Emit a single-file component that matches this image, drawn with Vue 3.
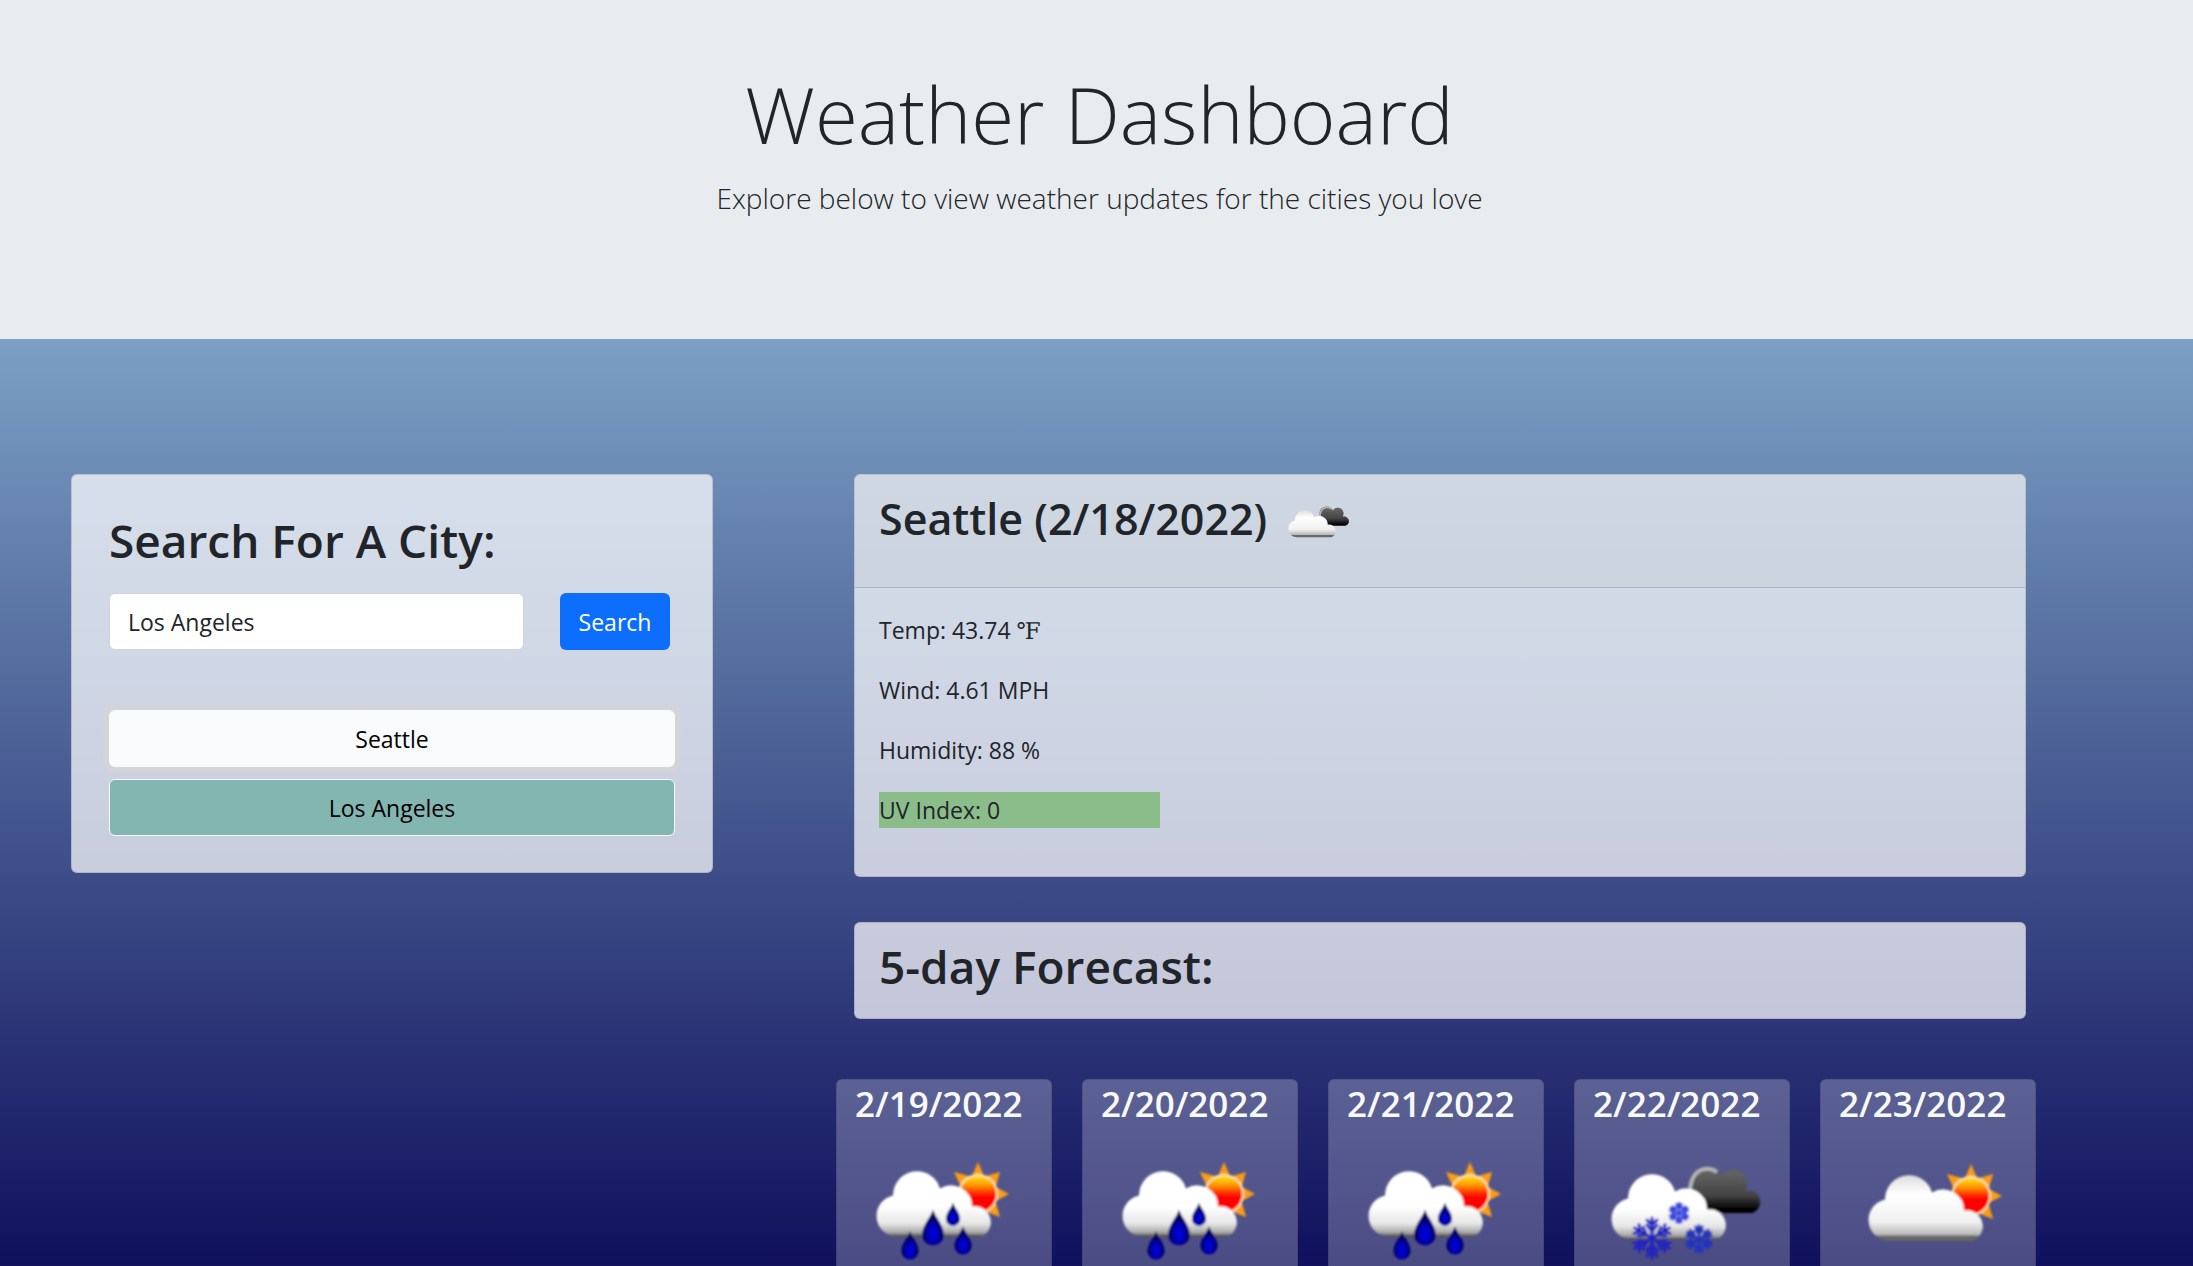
<script setup>
import { ref } from 'vue'

const query = ref('Los Angeles')
const forecast = [
  { date: '2/19/2022', icon: 'rain' },
  { date: '2/20/2022', icon: 'rain' },
  { date: '2/21/2022', icon: 'rain' },
  { date: '2/22/2022', icon: 'snow' },
  { date: '2/23/2022', icon: 'sun' },
]
</script>

<template>
  <div class="page">
    <svg class="defs" width="0" height="0" aria-hidden="true">
      <defs>
        <filter id="soft" x="-5%" y="-5%" width="110%" height="110%"><feGaussianBlur stdDeviation="0.9" /></filter>
        <linearGradient id="cloudFill" gradientUnits="userSpaceOnUse" x1="0" y1="29" x2="0" y2="97">
          <stop offset="0" stop-color="#fff" />
          <stop offset="0.55" stop-color="#fff" />
          <stop offset="0.8" stop-color="#e6e6e6" />
          <stop offset="0.93" stop-color="#aaa" />
          <stop offset="1" stop-color="#444" />
        </linearGradient>
        <linearGradient id="cloudBase" gradientUnits="userSpaceOnUse" x1="0" y1="29" x2="0" y2="99">
          <stop offset="0" stop-color="#d8d8d8" />
          <stop offset="0.3" stop-color="#fff" />
          <stop offset="0.7" stop-color="#f0f0f0" />
          <stop offset="0.88" stop-color="#b8b8b8" />
          <stop offset="0.9" stop-color="#6c6c6c" />
          <stop offset="1" stop-color="#606060" />
        </linearGradient>
        <linearGradient id="darkFill" gradientUnits="userSpaceOnUse" x1="0" y1="25" x2="0" y2="73">
          <stop offset="0.2" stop-color="#606060" />
          <stop offset="0.65" stop-color="#424242" />
          <stop offset="0.9" stop-color="#050505" />
        </linearGradient>
        <linearGradient id="sunFill" x1="0" y1="0" x2="0" y2="1">
          <stop offset="0" stop-color="#ffe020" />
          <stop offset="0.25" stop-color="#ff9a00" />
          <stop offset="0.5" stop-color="#ff2000" />
          <stop offset="0.6" stop-color="#f00" />
        </linearGradient>
        <radialGradient id="dropFill" cx="0.5" cy="0.68" r="0.5">
          <stop offset="0" stop-color="#0000e6" />
          <stop offset="0.5" stop-color="#0000b4" />
          <stop offset="1" stop-color="#00004c" />
        </radialGradient>
        <path id="cloud" d="M38 97A21 21 0 0 1 33 55.500A24 24 0 0 1 80 48.500A21 21 0 0 1 112 66.500A16 16 0 0 1 121 97Z" />
        <path id="drop" d="M0-16C2-9 10-2 10 7A10 10 0 0 1-10 7C-10-2-2-9 0-16Z" fill="url(#dropFill)" />
        <g id="sun">
          <path fill="#f99d12" d="M0-32L6-18L-6-18ZM-24-22L-9-18L-18-9ZM22-22L18-8L8-18ZM31 0L18 7L18-7ZM22 23L9 18L18 9Z" />
          <circle r="20" fill="#ffe3b0" />
          <circle r="18" fill="url(#sunFill)" />
        </g>
        <g id="dark">
          <path fill="url(#darkFill)" d="M92 73L89 44A17 17 0 0 1 121 36A14 14 0 0 1 145 51A11 11 0 0 1 152 73Z" />
          <path fill="none" stroke="#b4b4b4" stroke-width="4" d="M90 50C91 37 97 30 105 29Q112 28 117 32" />
        </g>
        <g id="flake" fill="none" stroke-linecap="round">
          <g v-for="a in [0, 60, 120, 180, 240, 300]" :key="a" :transform="`rotate(${a})`">
            <path d="M0 0V-20M0-7L-5-13M0-7L5-13M0-13L-5-18M0-13L5-18" />
          </g>
        </g>
      </defs>
    </svg>

    <header class="hero">
      <h1>Weather Dashboard</h1>
      <p>Explore below to view weather updates for the cities you love</p>
    </header>

    <main class="content">
      <aside class="card search">
        <h2><label for="city">Search For A City:</label></h2>
        <form class="search-row" @submit.prevent>
          <input id="city" v-model="query" type="text" />
          <button class="primary" type="submit">Search</button>
        </form>
        <div class="history">
          <button class="city focused" type="button">Seattle</button>
          <button class="city teal" type="button">Los Angeles</button>
        </div>
      </aside>

      <div class="results">
        <section class="card">
          <div class="card-header">
            <h3>Seattle (2/18/2022)</h3>
            <svg class="now-icon" viewBox="13 24 152 80" role="img" aria-label="Broken clouds">
              <g filter="url(#soft)">
                <use href="#dark" />
                <use href="#cloud" x="-3" y="4" fill="url(#cloudBase)" />
              </g>
            </svg>
          </div>
          <div class="card-body">
            <p>Temp: 43.74 <span class="unit">℉</span></p>
            <p>Wind: 4.61 MPH</p>
            <p>Humidity: 88 %</p>
            <p class="uv">UV Index: 0</p>
          </div>
        </section>

        <section class="card forecast-title">
          <h2>5-day Forecast:</h2>
        </section>

        <div class="days">
          <article v-for="day in forecast" :key="day.date" class="day">
            <h4>{{ day.date }}</h4>
            <svg class="day-icon" viewBox="0 0 170 126" aria-hidden="true">
              <g v-if="day.icon === 'rain'" filter="url(#soft)">
                <use href="#sun" x="118" y="54" />
                <use href="#cloud" fill="url(#cloudFill)" />
                <use href="#drop" transform="translate(93 74) scale(0.7)" />
                <use href="#drop" transform="translate(73 87) scale(1.08)" />
                <use href="#drop" transform="translate(50 105) scale(0.86)" />
                <use href="#drop" transform="translate(103 100) scale(0.86)" />
              </g>
              <g v-else-if="day.icon === 'snow'" filter="url(#soft)">
                <use href="#dark" x="2" />
                <use href="#cloud" x="-3" y="3" fill="url(#cloudFill)" />
                <use href="#flake" transform="translate(54 98)" stroke="#2024c0" stroke-width="3" />
                <use href="#flake" transform="translate(81 73) scale(0.5)" stroke="#3a48dc" stroke-width="5" />
                <use href="#flake" transform="translate(101 99) scale(0.68)" stroke="#2434bc" stroke-width="4" />
              </g>
              <g v-else filter="url(#soft)">
                <use href="#sun" x="127" y="56" />
                <use href="#cloud" x="8" y="4" fill="url(#cloudBase)" />
              </g>
            </svg>
          </article>
        </div>
      </div>
    </main>
  </div>
</template>

<style>
body {
  margin: 0;
}
</style>

<style scoped>
.page {
  display: flex;
  flex-direction: column;
  height: 100vh;
  overflow: hidden;
  box-sizing: border-box;
  color: #212529;
  font: 400 23px/36px "Segoe UI", "Open Sans", "Noto Sans", sans-serif;
}
.page * {
  box-sizing: border-box;
}
.defs {
  position: absolute;
}
h1, h2, h3, h4, p {
  margin: 0;
}
h2, h3, h4 {
  font-weight: 600;
}
.hero {
  flex: none;
  height: 339px;
  padding: 64px 0 0 6px;
  background: #e8ecef;
  text-align: center;
  font-weight: 300;
}
.hero h1 {
  font-size: 78px;
  line-height: 101px;
  font-weight: 300;
}
.hero p {
  margin-top: 12px;
  font-size: 28px;
  line-height: 42px;
}
.content {
  flex: 1;
  min-height: 0;
  display: grid;
  grid-template-columns: 642fr 1172fr;
  grid-template-rows: 100%;
  column-gap: 141px;
  align-items: start;
  padding: 135px 167px 0 71px;
  background: linear-gradient(#7ba0c4, #10105c);
}
.card {
  border: 1px solid rgba(0, 0, 0, 0.125);
  border-radius: 6px;
  background: rgba(255, 255, 255, 0.72);
}
.search {
  padding: 36px 37px 36px 37px;
}
h2 {
  font-size: 46px;
  line-height: 58px;
}
.search-row {
  display: flex;
  gap: 36px;
  margin-top: 24px;
}
input,
button {
  font: inherit;
  height: 57px;
  border: 1px solid transparent;
  border-radius: 6px;
}
input {
  flex: 1;
  min-width: 0;
  padding: 0 18px;
  border-color: #ced4da;
  background: #fff;
  color: #212529;
}
.primary {
  width: 110px;
  margin-right: 5px;
  padding: 0;
  background: #0d6efd;
  color: #fff;
}
.history {
  display: flex;
  flex-direction: column;
  gap: 12px;
  margin-top: 60px;
}
.city {
  border-color: #f8f9fa;
  color: #000;
}
.focused {
  background: #f9fafb;
  box-shadow: 0 0 0 6px rgba(211, 212, 213, 0.8);
}
.teal {
  background: #84b6b1;
}
.results {
  height: 100%;
  display: flex;
  flex-direction: column;
}
.card-header {
  display: flex;
  align-items: flex-start;
  gap: 21px;
  height: 113px;
  padding: 14px 24px;
  border-bottom: 1px solid rgba(0, 0, 0, 0.15);
  background: rgba(0, 0, 0, 0.03);
}
h3 {
  font-size: 43px;
  line-height: 60px;
}
.now-icon {
  width: 63px;
  height: 34px;
  margin-top: 16px;
}
.card-body {
  display: flex;
  flex-direction: column;
  gap: 24px;
  padding: 24px 24px 48px;
}
.unit {
  font-family: "Liberation Serif", "DejaVu Serif", serif;
  line-height: 1;
}
.uv {
  width: 25%;
  background: #8bbd8b;
}
.forecast-title {
  margin-top: 45px;
  padding: 14px 24px 23px;
}
.days {
  flex: 1;
  display: grid;
  grid-template-columns: repeat(5, 1fr);
  gap: 30px;
  margin: 60px -10px 0 -18px;
}
.day {
  border: 1px solid rgba(0, 0, 0, 0.125);
  border-bottom: 0;
  border-radius: 6px 6px 0 0;
  background: rgba(255, 255, 255, 0.25);
  color: #f8f9fa;
}
h4 {
  padding-left: 18px;
  font-size: 35px;
  line-height: 48px;
}
.day-icon {
  display: block;
  width: 170px;
  height: 126px;
  margin: 12px 0 0 23px;
}
</style>
